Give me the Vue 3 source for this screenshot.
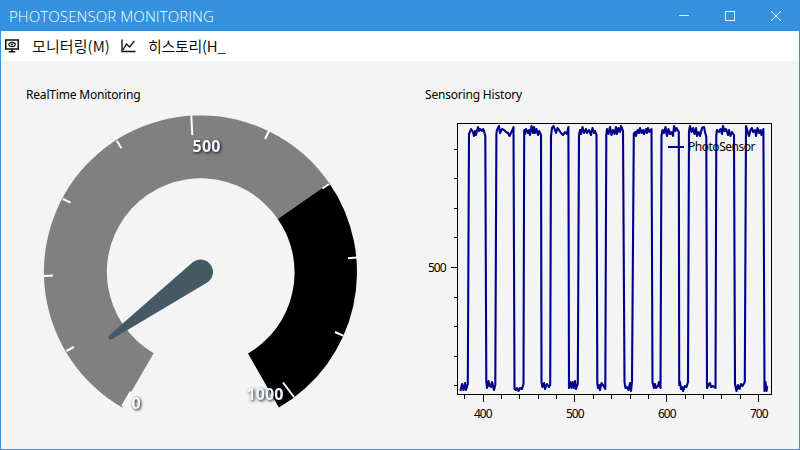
<script setup>
const xTicks = [464.5, 501.5, 519.5, 538.5, 556.5, 593.5, 611.5, 630.5, 648.5, 685.5, 703.5, 721.5, 740.5]
const xMajor = [483.5, 574.5, 666.5, 758.5]
const yTicks = [149.5, 178.5, 208.5, 237.5, 297.5, 326.5, 356.5, 385.5]

const highs = [
  [469, 134, 470, 132, 471, 129, 473, 132, 474, 136, 475, 131, 476, 135, 478, 127, 479, 131, 480, 129, 482, 131, 483, 129, 484, 131, 485.3, 136],
  [496.4, 134, 497, 130, 499, 126, 500, 133, 502, 129, 504, 130, 506, 132, 508, 133, 509.5, 136, 511, 133, 512, 131, 513.5, 127],
  [524.2, 130, 525, 134, 526, 129, 528, 133, 529, 130, 530, 135, 531.5, 126, 533, 133, 534, 127, 535, 133, 536.5, 129, 538, 135, 539, 131, 541, 135],
  [551, 136, 552, 128, 553.5, 126, 555, 130, 556, 133, 557.5, 128, 559, 130, 561, 133, 563, 135, 565, 132, 567, 134, 568.4, 127],
  [579, 135, 580, 130, 581, 134, 582.5, 127, 584, 133, 586, 129, 587, 133, 589, 130, 591, 135, 592.5, 128, 594, 133, 595, 131, 596.5, 135],
  [606.3, 135, 607, 129, 608.5, 134, 610, 127, 611.5, 135, 613, 130, 614.5, 134, 616, 127, 617, 134, 618.5, 128, 620, 132, 621, 126, 623, 131],
  [633.8, 134, 635, 132, 636, 136, 637.5, 130, 639, 133, 640, 128, 641.5, 133, 643, 130, 644, 134, 646, 129, 647, 133, 648, 128, 649.5, 132, 651.5, 129],
  [661.5, 136, 662.5, 130, 664, 133, 665.5, 127, 667, 136, 668.5, 129, 670, 134, 671.5, 132, 673, 136, 674, 126, 675.5, 131, 676.5, 128, 678.8, 132],
  [689, 131, 690, 126, 691.5, 132, 693, 128, 694.5, 134, 696, 128, 697, 136, 698.5, 132, 700, 136, 702, 128, 704, 127, 705, 132, 706.3, 137],
  [716.3, 135, 717, 130, 719, 132, 720.5, 129, 722, 134, 723, 126, 724.5, 131, 726, 129, 728, 135, 729, 130, 730.5, 136, 732, 132, 734, 135],
  [746, 126, 747.5, 131, 749, 136, 750.5, 130, 752, 128, 753, 132, 755, 130, 756, 136, 757.5, 128, 759, 133, 760.5, 130, 761.5, 135, 763.4, 129]
]
const lows = [
  [460.5, 391, 462, 384, 463.5, 390, 465, 383, 466, 390, 467.8, 384],
  [486.3, 382, 487, 388, 488.5, 381, 489.5, 386, 491, 387, 492, 382, 494, 390, 495.3, 385],
  [514.5, 389, 516, 390, 517, 388, 518.5, 391, 520, 388, 522, 389, 523.5, 384],
  [541.5, 382, 542.5, 387, 544, 383, 545, 389, 547, 384, 549, 387, 550.2, 385],
  [569, 388, 570, 382, 571.5, 388, 572.5, 382, 574, 388, 575, 381, 576, 389, 577.8, 384],
  [597.3, 383, 598, 388, 599, 385, 600, 390, 601.5, 383, 603, 385, 605.3, 389],
  [624.5, 382, 625.5, 388, 627, 387, 628.5, 390, 630, 383, 631, 391, 632, 382],
  [652.5, 382, 654, 388, 655, 384, 656, 388, 658, 386, 659, 382, 660.5, 388],
  [679.2, 385, 680, 382, 681, 389, 682.5, 387, 683, 391, 685, 386, 686.5, 387, 688, 382],
  [707, 388, 709, 384, 710, 383, 711, 387, 713, 386, 715.5, 388],
  [735, 384, 736.5, 391, 738, 385, 739.5, 389, 741, 384, 742.5, 386, 744.8, 382]
]
const wave = lows.flatMap((low, i) => [...low, ...highs[i]]).concat([764.5, 391, 765.5, 382, 766.5, 391, 767.2, 386]).join(' ')
</script>

<template>
  <div class="window">
    <header class="titlebar">
      <span class="title">PHOTOSENSOR MONITORING</span>
      <svg class="controls" width="138" height="30" fill="none" stroke="#e6f1fa" shape-rendering="crispEdges">
        <path d="M18 14.5h10M64.5 10.5h9v9h-9z" />
        <path d="M110 10l10 10M120 10l-10 10" shape-rendering="auto" />
      </svg>
    </header>
    <nav class="menu">
      <svg class="screen-icon" width="14" height="14" viewBox="0 0 14 14" fill="none" stroke="#111">
        <rect x=".75" y="1" width="12.5" height="9" stroke-width="1.5" />
        <ellipse cx="7" cy="5.5" rx="3.2" ry="2.1" stroke-width="1.2" />
        <circle cx="7" cy="5.5" r="1.1" fill="#111" stroke="none" />
        <path d="M7 10v3M3.7 12.7h6.6" stroke-width="1.6" />
      </svg>
      <span class="item first">모니터링(M)</span>
      <svg class="chart-icon" width="15" height="14" viewBox="0 0 15 14" fill="none" stroke="#111" stroke-width="1.4">
        <path d="M1 .5v12h13.5M2 11l3.4-6 3.3 3 4.7-6.2" />
      </svg>
      <span class="item second">히스토리(H_</span>
    </nav>
    <main class="content">
      <section class="gauge-panel">
        <h2>RealTime Monitoring</h2>
        <svg class="gauge" width="340" height="320" viewBox="30 105 340 320">
          <path fill="#808080" d="M122.25 407.5A156.5 156.5 0 1 1 329.2 183L277.6 218.7A93.7 93.7 0 1 0 153.65 353.15Z" />
          <path fill="#000" d="M329.2 183A156.5 156.5 0 0 1 278.9 407.5L248 353.5A93.7 93.7 0 0 0 277.6 218.7Z" />
          <path d="M329.2 183L277.6 218.7" stroke="#888" stroke-width=".7" />
          <g stroke="#fff" stroke-width="2">
            <path d="M122.3 406l8.5-14.5M66.5 351l7.3-4M44 275.9l9-.3M63 199l7.5 3.7M116.8 140.7l4.7 7.6M191.3 115.5l1 19.5M269 131l-4 8M329.3 184l-7 4.5M348 258.3l9-.8M335 332l8.6 3.8M294 397l-11-14.5" />
          </g>
          <path fill="#465a65" d="M193 262A12.5 12.5 0 1 1 206.8 282.8L112.4 339A2.4 2.4 0 0 1 109.5 335Z" />
          <g class="gauge-label">
            <text x="192.5" y="151.5" textLength="28">500</text>
            <text x="131.5" y="408.5">0</text>
            <text x="246.5" y="400" textLength="37">1000</text>
          </g>
        </svg>
      </section>
      <section class="chart-panel">
        <h2 class="history">Sensoring History</h2>
        <svg class="chart" width="375" height="320" viewBox="424 105 375 320">
          <rect x="457.5" y="123.5" width="314" height="271" fill="none" stroke="#000" shape-rendering="crispEdges" />
          <g stroke="#000" shape-rendering="crispEdges">
            <path v-for="x in xTicks" :key="x" :d="`M${x} 394v5`" />
            <path v-for="x in xMajor" :key="x" :d="`M${x} 394v8`" />
            <path v-for="y in yTicks" :key="y" :d="`M454 ${y}h4`" />
            <path d="M451 267.5h7" />
          </g>
          <polyline :points="wave" fill="none" stroke="#00008b" stroke-width="2.1" stroke-linejoin="round" />
          <path d="M668 147h16" stroke="#00008b" stroke-width="2" />
          <g class="axis-label">
            <text x="688" y="151" textLength="67.5">PhotoSensor</text>
            <text x="428" y="272" textLength="18.5">500</text>
            <text x="474" y="418" textLength="18.5">400</text>
            <text x="566" y="418" textLength="18.5">500</text>
            <text x="658" y="418" textLength="18.5">600</text>
            <text x="750" y="418" textLength="18.5">700</text>
          </g>
        </svg>
      </section>
    </main>
  </div>
</template>

<style>
body { margin: 0; }
</style>

<style scoped>
.window {
  box-sizing: border-box;
  width: 800px;
  height: 450px;
  display: flex;
  flex-direction: column;
  border: 1px solid #3492e0;
  background: #f4f4f4;
  color: #000;
  font-family: "Noto Sans", "Noto Sans CJK KR", sans-serif;
  overflow: hidden;
}
.titlebar {
  height: 30px;
  flex: none;
  display: flex;
  align-items: center;
  justify-content: space-between;
  background: #3492e0;
}
.title {
  padding-left: 8px;
  color: #fff;
  font: 300 15px/30px "Open Sans", sans-serif;
  letter-spacing: 0.1px;
  white-space: nowrap;
}
.menu {
  height: 30px;
  flex: none;
  display: flex;
  align-items: center;
  padding-left: 4px;
  background: #fff;
  white-space: nowrap;
}
.item {
  font: 350 15px/28px "Noto Sans CJK KR", sans-serif;
}
.first { width: 77px; margin: 0 12px 0 13px; letter-spacing: 0.1px; }
.second { letter-spacing: -0.3px; }
.chart-icon { margin-right: 12px; }
.content {
  flex: 1;
  display: flex;
}
.gauge-panel { width: 398px; padding-left: 25px; box-sizing: border-box; }
.chart-panel { width: 400px; padding-left: 25px; box-sizing: border-box; }
h2 {
  margin: 0;
  height: 44px;
  padding-top: 25px;
  box-sizing: border-box;
  font: 400 12px/18px "Noto Sans", sans-serif;
  letter-spacing: -0.19px;
}
.history { padding-left: 1px; }
svg { display: block; flex: none; }
.gauge { margin-left: 4px; }
.gauge-label {
  font: 700 16px "Noto Sans", sans-serif;
  fill: #f0f8ff;
  filter: drop-shadow(1.5px 1.5px 1.5px rgba(0, 0, 0, 0.9));
}
.axis-label { font: 400 12px "Noto Sans", sans-serif; }
</style>
